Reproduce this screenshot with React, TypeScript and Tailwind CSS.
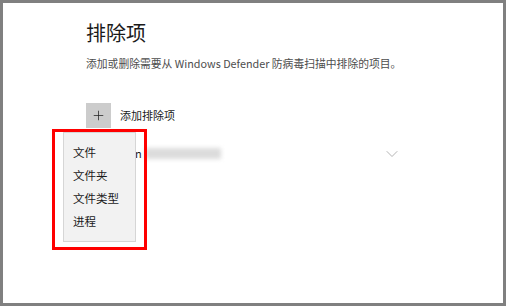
import { Plus, ChevronDown } from 'lucide-react';

const font = { fontFamily: '"Noto Sans CJK SC", "Noto Sans", sans-serif' };

// Menu options shown in the "添加排除项" popup.
const options = ['文件', '文件夹', '文件类型', '进程'];

export default function App() {
  return (
    <div className="h-[306px] w-[506px] bg-[#808080] p-[3px]" style={font}>
      <div className="relative h-full w-full overflow-hidden bg-white">
        <div className="flex flex-col pl-[83px] pt-[16px]">
          <h1 className="text-[20px] leading-[28px] font-normal text-[#1a1a1a]">排除项</h1>
          <p className="mt-[8px] text-[10.8px] leading-[16px] text-[#4d4d4d]">
            添加或删除需要从 Windows Defender 防病毒扫描中排除的项目。
          </p>

          <div className="mt-[32px] flex items-center gap-[9px]">
            <div className="flex h-[25px] w-[25px] items-center justify-center bg-[#cccccc]">
              <Plus size={15} strokeWidth={1.2} className="text-[#222]" />
            </div>
            <span className="text-[11px] text-[#1a1a1a]">添加排除项</span>
          </div>

          {/* existing exclusion (path is blurred out) */}
          <div className="mt-[17px] flex h-[16px] w-[316px] items-center">
            <div className="w-[49px]" />
            <span className="text-[11px] text-[#1a1a1a]">n</span>
            <div className="ml-[3px] h-[11px] w-[76px] bg-[#dcdcdc] blur-[2px]" />
            <div className="flex-1" />
            <ChevronDown size={20} strokeWidth={0.9} className="mt-[2px] text-[#9a9a9a]" />
          </div>
        </div>

        {/* dropdown menu */}
        <div className="absolute top-[129px] left-[60px] flex h-[110px] w-[73px] flex-col border border-[#d6d6d6] bg-[#f2f2f2] pt-[11px] pl-[9px]">
          {options.map((o) => (
            <div key={o} className="h-[23px] text-[11.5px] leading-[16px] text-[#1a1a1a]">
              {o}
            </div>
          ))}
        </div>

        {/* red highlight */}
        <div className="absolute top-[126px] left-[49px] h-[121px] w-[95px] border-[3px] border-[#ff0000]" />
      </div>
    </div>
  );
}
